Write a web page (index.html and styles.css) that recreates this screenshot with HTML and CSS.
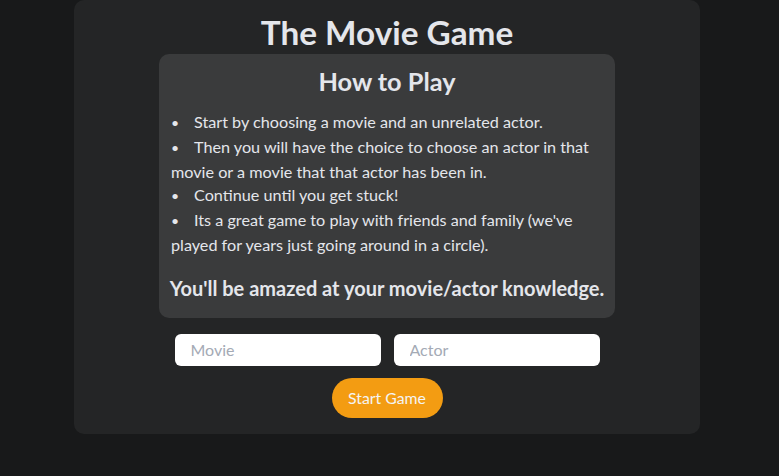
FILE: index.html
```html
<!DOCTYPE html>
<html>
<head>
<meta charset="utf-8">
<link rel="stylesheet" href="styles.css">
</head>
<body>
<div class="app">
  <h1 class="title">The Movie Game</h1>
  <div class="card">
    <h2 class="card-title">How to Play</h2>
    <ul class="rules">
      <li>Start by choosing a movie and an unrelated actor.</li>
      <li>Then you will have the choice to choose an actor in that movie or a movie that that actor has been in.</li>
      <li>Continue until you get stuck!</li>
      <li>Its a great game to play with friends and family (we've played for years just going around in a circle).</li>
    </ul>
    <p class="tagline">You'll be amazed at your movie/actor knowledge.</p>
  </div>
  <div class="inputs">
    <input class="field" type="text" placeholder="Movie">
    <input class="field" type="text" placeholder="Actor">
  </div>
  <button class="start">Start Game</button>
</div>
</body>
</html>
```
FILE: styles.css
```css
* { box-sizing: border-box; }
html, body { margin: 0; padding: 0; }
body {
  background: #18191a;
  font-family: Lato, "Noto Sans", sans-serif;
  color: #e4e6eb;
  height: 476px;
}
.app {
  width: 626px;
  margin: 0 0 0 74px;
  background: #242526;
  border-radius: 10px;
  display: flex;
  flex-direction: column;
  align-items: center;
  padding: 12px 0 16px;
}
.title {
  margin: 0;
  font-size: 33.3px;
  font-weight: 700;
  line-height: 40px;
}
.card {
  width: 456px;
  margin-top: 2px;
  background: #3a3b3c;
  border-radius: 10px;
  padding: 10px 12px 18px;
}
.card-title {
  margin: 0;
  text-align: center;
  font-size: 25.3px;
  font-weight: 700;
  line-height: 34px;
}
.rules {
  list-style: none;
  margin: 12px 0 0;
  padding: 0;
  font-size: 16.2px;
  line-height: 23.8px;
}
.rules li::before {
  content: "•";
  display: inline-block;
  width: 23px;
  font-size: 14px;
}
.tagline {
  margin: 19px -8px 0;
  font-size: 20px;
  font-weight: 700;
  line-height: 24px;
  text-align: center;
  white-space: nowrap;
}
.inputs {
  display: flex;
  gap: 13px;
  margin-top: 16px;
}
.field {
  width: 206px;
  height: 32px;
  border: none;
  border-radius: 6px;
  background: #fff;
  padding: 0 16px;
  font-family: inherit;
  font-size: 16px;
  color: #333;
  outline: none;
}
.field::placeholder { color: #a4aab5; }
.start {
  margin-top: 12px;
  width: 111px;
  height: 40px;
  border: none;
  border-radius: 20px;
  background: #f39c12;
  color: #f4f4f4;
  font-family: inherit;
  font-size: 15.8px;
}
```
